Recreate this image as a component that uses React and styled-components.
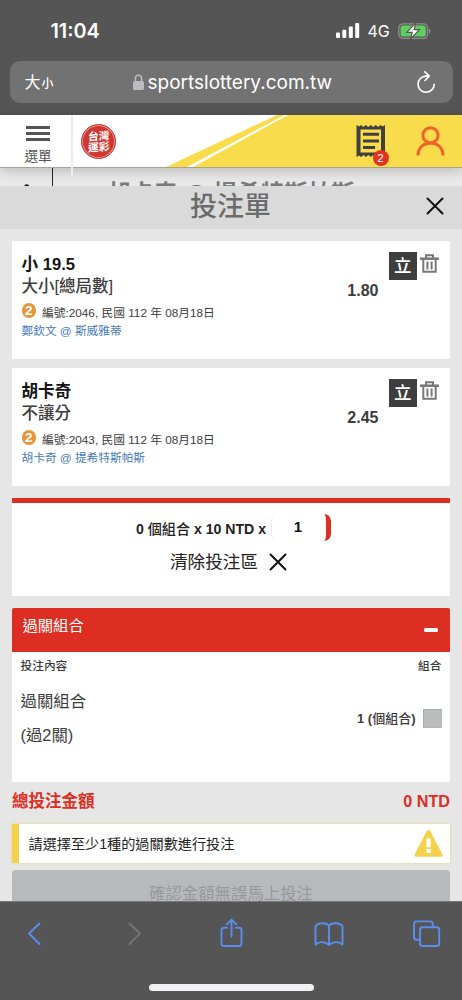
import React from "react";
import styled, { createGlobalStyle } from "styled-components";

const Global = createGlobalStyle`
  * { box-sizing: border-box; }
  body { margin: 0; background: #e6e6e6; }
  svg { display: block; }
`;

const Screen = styled.div`
  width: 462px;
  height: 1000px;
  overflow: hidden;
  display: flex;
  flex-direction: column;
  background: #e6e6e6;
  color: #3c3c3c;
  font-family: "Liberation Sans", "Noto Sans CJK TC", sans-serif;
  white-space: nowrap;
`;

const Text = styled.span`
  font-size: ${(p) => p.$size}px;
  font-weight: ${(p) => p.$weight || 400};
  color: ${(p) => p.$color || "inherit"};
  line-height: ${(p) => p.$line || 20}px;
  letter-spacing: ${(p) => p.$track || 0}px;
`;
const Medium = styled.span`
  font-weight: 500;
`;

/* Browser chrome */
const Chrome = styled.div`
  height: 115px;
  flex: none;
  background: #555;
  color: #fff;
  padding: 0 9.5px;
  font-family: Inter, "Noto Sans CJK TC", sans-serif;
`;
const StatusBar = styled.div`
  height: 61px;
  display: flex;
  align-items: center;
  padding: 0 22px 0 41px;
`;
const Clock = styled(Text)`
  margin-right: auto;
`;
const Signal = styled.svg`
  margin-right: 7px;
`;
const Battery = styled.svg`
  margin-left: 8px;
`;
const AddressBar = styled.div`
  height: 42px;
  border-radius: 10px;
  background: #727272;
  display: flex;
  align-items: center;
  padding: 0 16.5px 0 15px;
`;
const TextSize = styled.div`
  display: flex;
  align-items: baseline;
  gap: 1px;
  width: 108px;
  padding-top: 2px;
`;
const Domain = styled(Text)`
  margin-left: 4px;
  padding-top: 2px;
  flex: 1;
`;

/* Site header */
const SiteHeader = styled.header`
  position: relative;
  z-index: 2;
  height: 53px;
  flex: none;
  display: flex;
  background: #fff;
  border-bottom: 1px solid #a9a68f;
  box-shadow: 0 3px 12px rgba(0, 0, 0, 0.2);
`;
const MenuButton = styled.div`
  width: 71px;
  padding: 10.500px 0 0 5px;
  display: flex;
  flex-direction: column;
  align-items: center;
  color: #555;
`;
const Bars = styled.div`
  width: 24px;
  height: 18px;
  border-top: 3px solid #555;
  border-bottom: 3px solid #555;
  display: flex;
  align-items: center;
  margin-bottom: 6px;
  &::after { content: ""; width: 24px; height: 3px; background: #555; }
`;
const Divider = styled.div`
  width: 2px;
  height: 62px;
  flex: none;
  background: #ededed;
`;
const Logo = styled.div`
  width: 35px;
  height: 35px;
  margin: 9px 0 0 8px;
  border-radius: 50%;
  background: #cf3731;
  border: 1px solid #cf3731;
  box-shadow: inset 0 0 0 1px #e99a96;
  display: flex;
  flex-direction: column;
  align-items: center;
  justify-content: center;
  z-index: 1;
  span { transform: skewY(-4deg); }
`;
const Sash = styled.svg`
  position: absolute;
  top: 0;
  right: 0;
`;
const HeaderActions = styled.div`
  position: relative;
  display: flex;
  margin-left: auto;
  padding: 9px 17.5px 0 0;
  gap: 30px;
`;
const SlipIcon = styled.div`
  position: relative;
`;
const SlipCount = styled.div`
  position: absolute;
  left: 17px;
  top: 25.5px;
  width: 16px;
  height: 16px;
  border-radius: 50%;
  background: #df3423;
  color: #fff;
  font-size: 11.5px;
  line-height: 16px;
  text-align: center;
`;

/* Page strip showing above the slip */
const MatchStrip = styled.div`
  height: 18px;
  flex: none;
  overflow: hidden;
  display: flex;
  padding-left: 19px;
  background: #e9e9e9;
`;
const BackTab = styled.div`
  width: 34px;
  height: 18px;
  border-right: 1.5px solid #222;
  padding: 16px 0 0 3px;
`;
const MatchName = styled(Text)`
  margin: 11px 0 0 54px;
`;

/* Bet slip */
const SlipTitle = styled.div`
  height: 43px;
  flex: none;
  background: #dadada;
  display: flex;
  justify-content: flex-end;
  padding: 0 18px 0 0;
`;
const TitleText = styled(Text)`
  margin-right: 155px;
`;
const CloseIcon = styled.svg`
  margin-top: 10.5px;
`;
const Slip = styled.main`
  flex: 1;
  min-height: 0;
  overflow: hidden;
  padding: 12px 12px 0;
`;
const Pick = styled.section`
  height: 118px;
  margin-bottom: 9px;
  padding: 10px 11px 0 9.5px;
  background: #fff;
  display: flex;
`;
const PickInfo = styled.div`
  flex: 1;
  display: flex;
  flex-direction: column;
  padding-top: 2px;
`;
const Meta = styled.div`
  display: flex;
  gap: 6px;
  height: 17px;
  margin-top: 6px;
`;
const LegBadge = styled.div`
  width: 14.5px;
  height: 14.5px;
  border-radius: 50%;
  background: #e8953a;
  color: #fff;
  font-size: 13.5px;
  font-weight: 700;
  line-height: 15px;
  text-align: center;
`;
const Odds = styled(Text)`
  padding-top: 29.5px;
  margin-right: 10px;
`;
const Banker = styled.div`
  width: 28.5px;
  height: 28.5px;
  margin: 0.5px 3px 0 0;
  background: #3e3e3e;
  color: #fff;
  font-size: 17.5px;
  font-weight: 500;
  line-height: 28px;
  text-align: center;
`;
const Trash = styled.svg`
  margin-top: 3px;
`;
const Stake = styled.section`
  height: 98px;
  margin: 12px 0;
  border-top: 5px solid #dd2e22;
  background: #fff;
  display: flex;
  flex-direction: column;
  align-items: center;
  padding-top: 11px;
`;
const StakeRow = styled.div`
  display: flex;
  align-items: flex-start;
  gap: 5px;
  height: 29px;
  padding-left: 5px;
`;
const StakeInput = styled.div`
  width: 60px;
  height: 27px;
  border-radius: 7px;
  border-left: 1px solid #fbe3e3;
  border-right: 5px solid #dd2e22;
  background: #fff;
  text-align: center;
  color: #111;
  padding-right: 2px;
`;
const ClearRow = styled.div`
  display: flex;
  align-items: center;
  gap: 11px;
  margin-top: 9px;
  padding-right: 5px;
`;
const ComboHead = styled.div`
  height: 44px;
  border-radius: 2px 2px 0 0;
  background: #dc2e22;
  display: flex;
  justify-content: space-between;
  padding: 8px 12px 0 10.5px;
`;
const Minus = styled.div`
  width: 14.5px;
  height: 4px;
  margin-top: 12px;
  border-radius: 1.5px;
  background: #fff;
`;
const ComboBody = styled.div`
  height: 130px;
  background: #fff;
  padding: 4px 8.5px 0;
`;
const Row = styled.div`
  display: flex;
  justify-content: space-between;
`;
const ComboName = styled.div`
  display: flex;
  flex-direction: column;
  padding-top: 8px;
`;
const ComboPick = styled.div`
  display: flex;
  gap: 7px;
  padding-top: 33px;
`;
const Checkbox = styled.div`
  width: 19px;
  height: 19px;
  background: #bbbcbe;
  border: 1px solid #a9a9ab;
  border-right-color: #b5b5b5;
  border-bottom-color: #b5b5b5;
`;
const Total = styled(Row)`
  padding-top: 8.5px;
  height: 42px;
`;
const Notice = styled.div`
  height: 39px;
  background: #fff;
  border-left: 7px solid #f4d24c;
  box-shadow: 0 0 3px rgba(235, 215, 120, 0.8);
  display: flex;
  align-items: center;
  justify-content: space-between;
  padding: 0 7px 0 9.5px;
`;
const Confirm = styled.div`
  height: 47px;
  margin-top: 7px;
  border-radius: 4px;
  background: #b8b9bd;
  text-align: center;
  padding-top: 13px;
`;

/* Browser toolbar */
const Toolbar = styled.nav`
  height: 99px;
  flex: none;
  background: #555;
  border-top: 1px solid #777;
  color: #5a8ff0;
  display: flex;
  flex-direction: column;
  align-items: center;
`;
const Tools = styled.div`
  width: 100%;
  display: flex;
  justify-content: space-between;
  padding: 15px 19px 0 18px;
  height: 82px;
`;
const HomeIndicator = styled.div`
  width: 165px;
  height: 6.5px;
  border-radius: 4px;
  background: #f1f0f2;
`;

const Tool = ({ children, color = "currentColor" }) => (
  <svg width="32" height="32" viewBox="0 0 32 32" fill="none" stroke={color} strokeWidth="1.9" strokeLinecap="round" strokeLinejoin="round">
    {children}
  </svg>
);

const Cross = ({ size, weight, as: Tag = "svg" }) => (
  <Tag width={size} height={size} viewBox="0 0 18 18" stroke="#111" strokeWidth={weight} strokeLinecap="round">
    <path d="M1.5 1.5 16.5 16.5M16.5 1.5 1.5 16.5" />
  </Tag>
);

const PickCard = ({ title, market, odds, number, match }) => (
  <Pick>
    <PickInfo>
      <Text $size={16.6} $weight={700} $color="#151515" $line={23}>{title}</Text>
      <Text $size={16.5} $weight={500} $line={21}>{market}</Text>
      <Meta>
        <LegBadge>2</LegBadge>
        <Text $size={11.75} $line={20}>編號:{number}, 民國 112 年 08月18日</Text>
      </Meta>
      <Text $size={11.7} $color="#457bb8" $line={21}>{match}</Text>
    </PickInfo>
    <Odds $size={16} $weight={700}>{odds}</Odds>
    <Banker>立</Banker>
    <Trash width="19" height="19" viewBox="0 0 19 19" fill="none" stroke="#777" strokeWidth="2">
      <path d="M0 4.7h19" strokeWidth="2.5" />
      <path d="M6 4V1.200h7V4M3.300 5v12.800h12.400V5M7.400 7.500v8M11.600 7.500v8" />
    </Trash>
  </Pick>
);

export default function App() {
  return (
    <Screen>
      <Global />
      <Chrome>
        <StatusBar>
          <Clock $size={19.8} $weight={600}>11:04</Clock>
          <Signal width="24" height="15" viewBox="0 0 24 15" fill="#fff">
            <rect x="0" y="9.5" width="4" height="5.5" rx="1" />
            <rect x="6.3" y="6.7" width="4" height="8.3" rx="1" />
            <rect x="12.8" y="3.5" width="4" height="11.5" rx="1" />
            <rect x="19.2" y="0" width="4" height="15" rx="1" />
          </Signal>
          <Text $size={16} $weight={400} $track={-0.1}>4G</Text>
          <Battery width="33" height="18" viewBox="0 0 33 18">
            <rect x="0.8" y="1.8" width="28.8" height="14.6" rx="4.2" fill="none" stroke="#8f8f8f" strokeWidth="1.3" />
            <path d="M31 6.5c2 .8 2 4.2 0 5z" fill="#8f8f8f" />
            <rect x="2.6" y="3.6" width="25.2" height="11" rx="2.6" fill="#5fcf62" />
            <path d="M17.8.8 8.8 10.3h5.4l-1.8 6.7 9-9.3h-5.3z" fill="#fff" stroke="#555" strokeWidth="1.2" />
          </Battery>
        </StatusBar>
        <AddressBar>
          <TextSize>
            <Text $size={16}>大</Text>
            <Text $size={12} $weight={500}>小</Text>
          </TextSize>
          <svg width="11" height="16" viewBox="0 0 11 16">
            <path d="M2.4 8V4.3a3.1 3.1 0 0 1 6.2 0V8" fill="none" stroke="#bcbcc0" strokeWidth="1.5" />
            <rect x="0" y="7" width="11" height="9" rx="1.6" fill="#bcbcc0" />
          </svg>
          <Domain $size={19} $line={24}>sportslottery.com.tw</Domain>
          <svg width="20" height="23" viewBox="0 0 20 23" fill="none" stroke="#fff" strokeWidth="1.6" strokeLinecap="round" strokeLinejoin="round">
            <path d="M18.200 13.200A8.100 8.100 0 1 1 10 5.100h3.300M8.900.9l4.400 4.200-4.400 4.400" />
          </svg>
        </AddressBar>
      </Chrome>

      <SiteHeader>
        <Sash width="296" height="52" viewBox="166 0 296 52">
          <path d="M166 52 277 0H462V52z" fill="#f8dc4b" />
          <path d="M187 52 284.5 0H288L193 52z" fill="#fff" />
        </Sash>
        <MenuButton>
          <Bars />
          <Text $size={13.6}>選單</Text>
        </MenuButton>
        <Divider />
        <Logo>
          <Text $size={10.8} $weight={700} $color="#fff" $line={10.5}>台灣</Text>
          <Text $size={10.8} $weight={700} $color="#fff" $line={10.5}>運彩</Text>
        </Logo>
        <HeaderActions>
          <SlipIcon>
            <svg width="30" height="34" viewBox="0 0 30 34">
              <path d="M.5 1 3 2.5 5 1l2.2 2 2.6-2 2.4 2 2.6-2 2.4 2 2.6-2 2.4 2 2.3-2 2 1.5L29 1v32l-2.5-1.5-2 1.5-2.3-2-2.4 2-2.6-2-2.4 2-2.4-2-2.6 2-2.2-2-2.6 2L3 31.5.5 33z" fill="#404040" />
              <path d="M4.5 5.5h20.5v23H4.5z" fill="#f8dc4b" />
              <path d="M7 10.2h16M7 17h16M7 23.6h12" stroke="#404040" strokeWidth="3" />
            </svg>
            <SlipCount>2</SlipCount>
          </SlipIcon>
          <svg width="29" height="33" viewBox="0 0 29 33" fill="none" stroke="#ef632b" strokeWidth="3">
            <circle cx="14.5" cy="11.3" r="7.6" />
            <path d="M2 31.500C2 23.500 7.600 19 14.500 19S27 23.500 27 31.500" />
          </svg>
        </HeaderActions>
      </SiteHeader>

      <MatchStrip>
        <BackTab>
          <svg width="8" height="4" viewBox="0 0 8 4"><path d="M0 4 4 0l3 1v3z" fill="#222" /></svg>
        </BackTab>
        <MatchName $size={23.5} $weight={700} $color="#7a7a7a" $line={30}>胡卡奇 @ 提希特斯帕斯</MatchName>
      </MatchStrip>

      <SlipTitle>
        <TitleText $size={27} $weight={500} $color="#6b6b6b" $line={42}>投注單</TitleText>
        <Cross as={CloseIcon} size={18} weight={2} />
      </SlipTitle>

      <Slip>
        <PickCard title="小 19.5" market="大小[總局數]" odds="1.80" number="2046" match="鄭欽文 @ 斯威雅蒂" />
        <PickCard title="胡卡奇" market="不讓分" odds="2.45" number="2043" match="胡卡奇 @ 提希特斯帕斯" />

        <Stake>
          <StakeRow>
            <Text $size={14.1} $weight={700} $color="#222" $line={31}>
              0 <Medium>個組合</Medium> x 10 NTD x
            </Text>
            <StakeInput>
              <Text $size={15} $weight={700} $line={25}>1</Text>
            </StakeInput>
          </StakeRow>
          <ClearRow>
            <Text $size={17.6} $color="#222">清除投注區</Text>
            <Cross size={18} weight={2} />
          </ClearRow>
        </Stake>

        <ComboHead>
          <Text $size={15.3} $color="#fff">過關組合</Text>
          <Minus />
        </ComboHead>
        <ComboBody>
          <Row>
            <Text $size={11.7} $weight={500}>投注內容</Text>
            <Text $size={11.7} $weight={500}>組合</Text>
          </Row>
          <Row>
            <ComboName>
              <Text $size={16.4} $line={34}>過關組合</Text>
              <Text $size={16.4} $line={34}>(過2關)</Text>
            </ComboName>
            <ComboPick>
              <Text $size={13} $weight={700}>
                1 (<Medium>個組合</Medium>)
              </Text>
              <Checkbox />
            </ComboPick>
          </Row>
        </ComboBody>

        <Total>
          <Text $size={16.5} $weight={700} $color="#dc2e22">總投注金額</Text>
          <Text $size={16.2} $weight={700} $color="#dc2e22">0 NTD</Text>
        </Total>
        <Notice>
          <Text $size={14.15} $color="#222">請選擇至少1種的過關數進行投注</Text>
          <svg width="29" height="27" viewBox="0 0 29 27">
            <path d="M12.6 1.2a2.1 2.1 0 0 1 3.8 0L28.2 24c.8 1.5 0 2.8-1.6 2.8H2.4C.8 26.800 0 25.500.8 24z" fill="#f4d24c" />
            <path d="M12.4 8.500h4.200v8.800h-4.200zM12.4 19h4.200v4h-4.200z" fill="#fff" />
          </svg>
        </Notice>
        <Confirm>
          <Text $size={16.4} $color="#97989b">確認金額無誤馬上投注</Text>
        </Confirm>
      </Slip>

      <Toolbar>
        <Tools>
          <Tool><path d="M21.500 6.500 11 16.500 21.500 27" /></Tool>
          <Tool color="#747474"><path d="M13.500 6.500 24 16.500 13.500 27" /></Tool>
          <Tool>
            <path d="M12 10.800H8.700a2.200 2.200 0 0 0-2.200 2.200v13.800A2.200 2.200 0 0 0 8.700 29h15.600a2.200 2.200 0 0 0 2.200-2.200V13a2.200 2.200 0 0 0-2.200-2.200H21M16.500 19.500V3M11.800 7.300 16.500 2.600l4.700 4.700" />
          </Tool>
          <Tool>
            <path d="M16 9C14 5.500 5 5 2.500 9.500V27.500C6 24.300 12 24.300 16 28M16 9C18 5.500 27 5 29.500 9.500V27.500C26 24.300 20 24.300 16 28zV28" />
          </Tool>
          <Tool>
            <path d="M8.500 22.800H5.600A2.600 2.600 0 0 1 3 20.200V7a2.600 2.600 0 0 1 2.600-2.600h13.600A2.600 2.600 0 0 1 21.800 7v3" />
            <rect x="9" y="10.300" width="19.200" height="18.700" rx="2.600" />
          </Tool>
        </Tools>
        <HomeIndicator />
      </Toolbar>
    </Screen>
  );
}
